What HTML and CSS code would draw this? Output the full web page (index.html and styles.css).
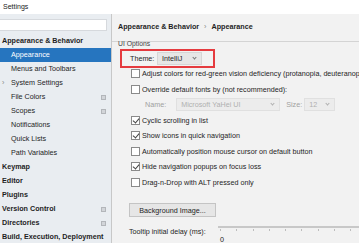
FILE: index.html
```html
<!DOCTYPE html>
<html lang="en">
<head>
    <meta charset="UTF-8">
    <meta name="viewport" content="width=device-width, initial-scale=1.0">
    <title>Settings</title>
    <link rel="stylesheet" href="styles.css">
</head>
<body>
    <div class="titlebar">Settings</div>
    <div class="main">
        <aside class="sidebar">
            <div class="search"></div>
            <ul class="tree">
                <li class="group">Appearance &amp; Behavior</li>
                <li class="sub selected">Appearance</li>
                <li class="sub">Menus and Toolbars</li>
                <li class="sub"><span class="arrow">›</span>System Settings</li>
                <li class="sub">File Colors<span class="proj"></span></li>
                <li class="sub">Scopes<span class="proj"></span></li>
                <li class="sub">Notifications</li>
                <li class="sub">Quick Lists</li>
                <li class="sub">Path Variables</li>
                <li class="group">Keymap</li>
                <li class="group">Editor</li>
                <li class="group">Plugins</li>
                <li class="group">Version Control<span class="proj"></span></li>
                <li class="group">Directories<span class="proj"></span></li>
                <li class="group">Build, Execution, Deployment</li>
            </ul>
        </aside>
        <section class="content">
            <div class="crumbs">Appearance &amp; Behavior<span class="sep">›</span>Appearance</div>
            <div class="body">
                <div class="legend">UI Options</div>
                <div class="theme-box">
                    <span class="label">Theme:</span>
                    <div class="combo theme">IntelliJ<span class="chev"></span></div>
                </div>
                <div class="check"><span class="box"></span>Adjust colors for red-green vision deficiency (protanopia, deuteranopia)</div>
                <div class="check"><span class="box"></span>Override default fonts by (not recommended):</div>
                <div class="font-row">
                    <span class="dim">Name:</span>
                    <div class="combo disabled name">Microsoft YaHei UI<span class="chev"></span></div>
                    <span class="dim size-label">Size:</span>
                    <div class="combo disabled size">12<span class="chev"></span></div>
                </div>
                <div class="check"><span class="box on"></span>Cyclic scrolling in list</div>
                <div class="check"><span class="box on"></span>Show icons in quick navigation</div>
                <div class="check"><span class="box"></span>Automatically position mouse cursor on default button</div>
                <div class="check"><span class="box on"></span>Hide navigation popups on focus loss</div>
                <div class="check"><span class="box"></span>Drag-n-Drop with ALT pressed only</div>
                <button class="btn">Background Image...</button>
                <div class="delay">
                    <span class="delay-label">Tooltip initial delay (ms):</span>
                    <div class="slider">
                        <div class="track"></div>
                        <div class="ticks">
                            <i></i><i></i><i></i><i></i><i></i><i></i><i></i><i></i><i></i>
                        </div>
                        <span class="zero">0</span>
                    </div>
                </div>
            </div>
        </section>
    </div>
</body>
</html>
```
FILE: styles.css
```css
*{margin:0; padding:0; box-sizing: border-box}
ul,li{list-style: none;}
body{width: 359px; height: 243px; overflow: hidden; font-family: "Liberation Sans", Arial, sans-serif; font-size: 7.2px; color: #1e1e1e; background: #f2f2f2;}
.titlebar{height: 14px; background: #fff; padding-left: 3px; line-height: 13px; font-size: 7px; color: #222;}
.main{display: flex; height: 229px;}

.sidebar{width: 112px; flex-shrink: 0; background: #e9edf1; border-right: 1px solid #c8c8c8;}
.search{width: 107px; height: 12px; margin-top: 5px; background: #fff; border: 1px solid #d6d9dd; border-left: none;}
.tree{margin-top: 3px;}
.tree li{position: relative; height: 14px; line-height: 14px; white-space: nowrap;}
.group{padding-left: 2px; font-weight: bold;}
.sub{padding-left: 11px;}
.selected{background: #2675bf; color: #fff;}
.arrow{position: absolute; left: 2px; color: #888;}
.proj{position: absolute; right: 5px; top: 5px; width: 5px; height: 5px; background: #d2d5d9; border: 1px solid #b3b6ba;}

.content{flex: 1; min-width: 0; overflow: hidden;}
.crumbs{height: 28px; line-height: 26px; padding-left: 6px; font-weight: bold; border-bottom: 1px solid #d4d4d4; white-space: nowrap;}
.sep{color: #888; font-weight: normal; margin: 0 5px;}
.body{padding-left: 6px; white-space: nowrap;}
.legend{height: 7px; line-height: 4px; font-size: 6.8px; color: #444;}
.theme-box{display: flex; align-items: center; width: 95px; height: 19px; margin-left: 2px; border: 2px solid #e53b3f; padding-left: 8px;}
.label{width: 27px;}
.combo{position: relative; height: 13px; line-height: 12px; background: #e6e6e6; border: 1px solid #d6d6d6; padding-left: 4px;}
.theme{width: 45px;}
.chev{position: absolute; right: 5px; top: 3px; width: 3px; height: 3px; border-right: 1px solid #777; border-bottom: 1px solid #777; transform: rotate(45deg);}
.check{display: flex; align-items: center; height: 15.5px; padding-left: 13px;}
.theme-box + .check{margin-top: -2px;}
.box{flex-shrink: 0; width: 9px; height: 9px; margin-right: 2px; background: #fff; border: 1px solid #8a8a8a; position: relative;}
.box.on::after{content: ""; position: absolute; left: 2px; top: 0; width: 3px; height: 5px; border-right: 1px solid #444; border-bottom: 1px solid #444; transform: rotate(40deg);}
.font-row{display: flex; align-items: center; height: 15.5px; padding-left: 27px;}
.dim{color: #a0a0a0;}
.disabled{color: #b0b0b0; background: #ececec; border-color: #e0e0e0;}
.disabled .chev{border-color: #b0b0b0;}
.name{width: 104px; margin-left: 10px;}
.size-label{margin-left: 6px;}
.size{width: 31px; margin-left: 2px;}
.btn{display: block; margin: 13px 0 0 11px; width: 87px; height: 14px; font-family: inherit; font-size: 7.2px; color: #1e1e1e; background: #e6e6e6; border: 1px solid #c4c4c4;}
.delay{display: flex; margin-top: 8px;}
.delay-label{width: 100px; padding-left: 11px; line-height: 14px;}
.slider{position: relative; flex: 1; height: 20px;}
.track{margin-top: 1px; height: 2px; background: #c8c8c8;}
.ticks{display: flex; gap: 15.3px; padding: 1px 0 0 2px;}
.ticks i{flex-shrink: 0; width: 1px; height: 2px; background: #bdbdbd;}
.zero{position: absolute; left: 2px; top: 10px; line-height: 10px;}
```
